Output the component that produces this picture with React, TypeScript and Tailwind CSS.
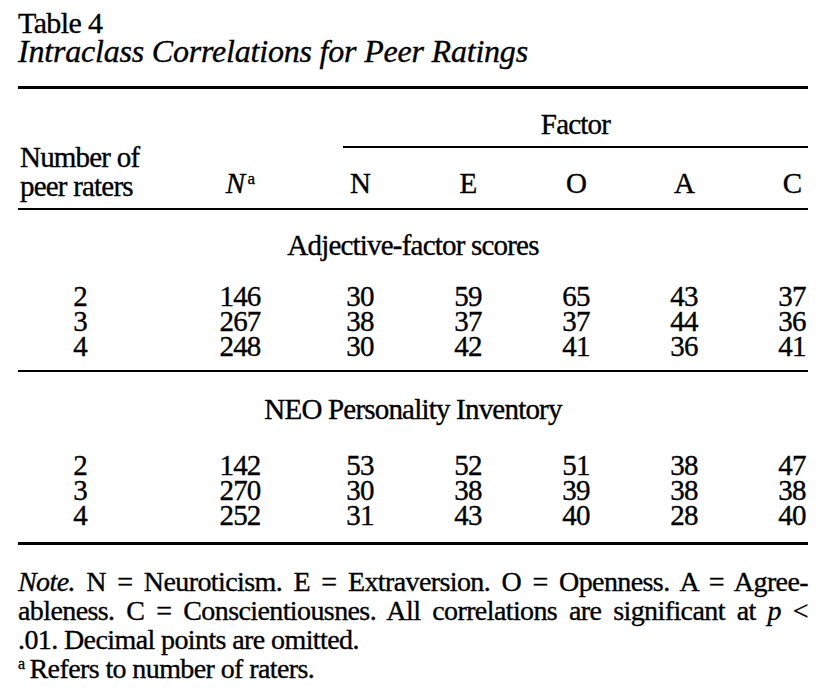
import React from "react";

const cols = "grid grid-cols-[124px_164px_108px_108px_108px_108px_70px]";

type Row = [string, string, string, string, string, string, string];

const adj: Row[] = [
  ["2", "146", "30", "59", "65", "43", "37"],
  ["3", "267", "38", "37", "37", "44", "36"],
  ["4", "248", "30", "42", "41", "36", "41"],
];

const neo: Row[] = [
  ["2", "142", "53", "52", "51", "38", "47"],
  ["3", "270", "30", "38", "39", "38", "38"],
  ["4", "252", "31", "43", "40", "28", "40"],
];

function DataRow({ r }: { r: Row }) {
  return (
    <div className={`${cols} leading-[25px]`}>
      <div className="text-center">{r[0]}</div>
      <div className="pl-[32px] text-center">{r[1]}</div>
      <div className="text-center">{r[2]}</div>
      <div className="text-center">{r[3]}</div>
      <div className="text-center">{r[4]}</div>
      <div className="text-center">{r[5]}</div>
      <div className="pl-[38px] text-center">{r[6]}</div>
    </div>
  );
}

export default function App() {
  return (
    <div className="w-[818px] h-[693px] bg-white text-black font-['Liberation_Serif','Times_New_Roman',serif] [-webkit-text-stroke:0.35px_black] pl-[18px] pr-[10px] pt-[9px] overflow-hidden">
      <div className="text-[30px] leading-[28px] tracking-[-0.6px]">Table 4</div>
      <div className="text-[32px] leading-[28px] italic tracking-[-0.2px]">Intraclass Correlations for Peer Ratings</div>

      <div className="mt-[21px] border-t-[3px] border-black" />

      <div className="text-[29px] tracking-[-0.8px]">
        {/* Header */}
        <div className={`${cols} pt-[22px] pb-[7px] border-b-2 border-black`}>
          <div className="col-start-1 row-start-1 row-span-2 self-end leading-[29px] whitespace-nowrap text-left pl-[2px]">
            Number of
            <br />
            peer raters
          </div>
          <div className="col-start-3 col-span-5 row-start-1 ml-[37px] text-center leading-[26px] pb-[9px] border-b-2 border-black">
            Factor
          </div>
          <div className="col-start-2 row-start-2 pl-[32px] text-center leading-[26px] pt-[22px]">
            <span className="italic">N</span>
            <span className="relative top-[-9px] text-[17px] ml-[3px]">a</span>
          </div>
          <div className="col-start-3 row-start-2 text-center leading-[26px] pt-[22px]">N</div>
          <div className="col-start-4 row-start-2 text-center leading-[26px] pt-[22px]">E</div>
          <div className="col-start-5 row-start-2 text-center leading-[26px] pt-[22px]">O</div>
          <div className="col-start-6 row-start-2 text-center leading-[26px] pt-[22px]">A</div>
          <div className="col-start-7 row-start-2 pl-[38px] text-center leading-[26px] pt-[22px]">C</div>
        </div>

        {/* Adjective-factor scores */}
        <div className="pt-[22px] leading-[26px] text-center">Adjective-factor scores</div>
        <div className="pt-[26px] pb-[11px] border-b-2 border-black">
          {adj.map((r) => (
            <DataRow key={r[0]} r={r} />
          ))}
        </div>

        {/* NEO */}
        <div className="pt-[24px] leading-[26px] text-center">NEO Personality Inventory</div>
        <div className="pt-[31px] pb-[14px] border-b-[3px] border-black">
          {neo.map((r) => (
            <DataRow key={r[0]} r={r} />
          ))}
        </div>

        {/* Note */}
        <div className="pt-[22px] leading-[29px] text-[28px] tracking-[-0.6px]">
          <div className="text-justify [text-align-last:justify] whitespace-nowrap">
            <span className="italic">Note.</span> N = Neuroticism. E = Extraversion. O = Openness. A = Agree-
          </div>
          <div className="text-justify [text-align-last:justify] whitespace-nowrap">
            ableness. C = Conscientiousnes. All correlations are significant at <span className="italic">p</span> &lt;
          </div>
          <div>.01. Decimal points are omitted.</div>
          <div>
            <span className="relative top-[-9px] text-[16px] mr-[5px]">a</span>Refers to number of raters.
          </div>
        </div>
      </div>
    </div>
  );
}
